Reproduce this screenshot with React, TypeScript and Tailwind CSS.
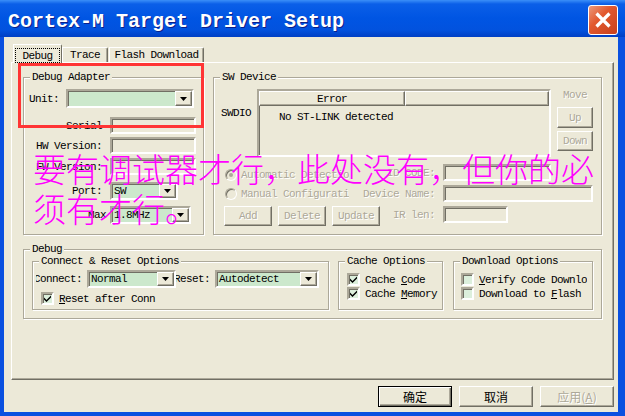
import type { ReactNode } from "react";

// classic 3D edges
const sunken =
  "border-2 border-t-[#aca899] border-l-[#aca899] border-r-white border-b-white shadow-[inset_1px_1px_0_#716f64]";
const raised =
  "border border-t-white border-l-white border-r-[#716f64] border-b-[#716f64] shadow-[inset_-1px_-1px_0_#aca899]";
const dim = "text-[#aca899] [text-shadow:1px_1px_0_#ffffff]";

function DownArrow() {
  return (
    <svg width="7" height="4" viewBox="0 0 7 4">
      <path d="M0 0h7L3.5 4z" fill="#000" />
    </svg>
  );
}

function Combo({ text, className }: { text: string; className: string }) {
  return (
    <div className={`flex shrink-0 bg-[#cce8cc] ${sunken} ${className}`}>
      <span className="flex-1 self-center pl-[2px] overflow-hidden whitespace-nowrap">{text}</span>
      <span className={`w-[17px] shrink-0 flex items-center justify-center bg-[#ece9d8] ${raised}`}>
        <DownArrow />
      </span>
    </div>
  );
}

function Field({ className }: { className: string }) {
  return <div className={`shrink-0 ${sunken} ${className}`} />;
}

function Check({ on }: { on?: boolean }) {
  return (
    <span className={`w-[13px] h-[13px] shrink-0 flex items-center justify-center bg-[#dcefdc] ${sunken}`}>
      {on && (
        <svg width="7" height="7" viewBox="0 0 7 7">
          <polygon points="0,2.5 2.5,5 7,0.5 7,2.5 2.5,7 0,4.5" fill="#000" />
        </svg>
      )}
    </span>
  );
}

function Radio({ on }: { on?: boolean }) {
  return (
    <span className="w-[12px] h-[12px] shrink-0 rounded-full flex items-center justify-center bg-[#ece9d8] border border-t-[#aca899] border-l-[#aca899] border-r-white border-b-white shadow-[inset_1px_1px_0_#716f64]">
      {on && <span className="w-[4px] h-[4px] rounded-full bg-[#aca899]" />}
    </span>
  );
}

function Btn({ children, className }: { children: ReactNode; className: string }) {
  return (
    <div className={`shrink-0 flex items-center justify-center bg-[#ece9d8] ${raised} ${dim} ${className}`}>
      {children}
    </div>
  );
}

function Group({ title, className, children }: { title: string; className: string; children?: ReactNode }) {
  return (
    <fieldset
      className={`min-w-0 shrink-0 border border-[#aca899] shadow-[inset_1px_1px_0_#fff,1px_1px_0_#fff] ${className}`}
    >
      <legend className="ml-[6px] px-[2px] leading-[12px] bg-[#ece9d8] whitespace-nowrap">{title}</legend>
      {children}
    </fieldset>
  );
}

function Row({ label, className, children }: { label: string; className: string; children: ReactNode }) {
  return (
    <div className={`flex items-center ${className}`}>
      <span className="w-[78px] shrink-0 text-right whitespace-nowrap">{label}</span>
      <span className="ml-[8px] flex">{children}</span>
    </div>
  );
}

function Tab({ children, className }: { children: ReactNode; className: string }) {
  return (
    <div
      className={`h-[15px] flex items-center justify-center bg-[#ece9d8] border-t border-l border-r border-t-white border-l-white border-r-[#716f64] rounded-tr-[2px] shadow-[inset_-1px_0_0_#aca899] ${className}`}
    >
      {children}
    </div>
  );
}

const cjk = "font-['Noto_Sans_CJK_SC',sans-serif] tracking-normal";

export default function App() {
  return (
    <div className="relative w-[625px] h-[416px] overflow-hidden flex flex-col bg-[#0a50e0] font-['Liberation_Mono','DejaVu_Sans_Mono',monospace] text-[11px] leading-[12px] tracking-[-0.6px] text-black">
      {/* title bar */}
      <div className="h-[37px] shrink-0 flex justify-between bg-[linear-gradient(180deg,#3b8ff8_0px,#0b5fe8_4px,#0055e3_18px,#0252de_30px,#003fc4_37px)]">
        <div className="pl-[8px] pt-[10px] text-[20px] leading-[24px] font-bold tracking-normal text-white whitespace-nowrap [text-shadow:1px_1px_0_#0b1f8a]">
          Cortex-M Target Driver Setup
        </div>
        <div className="mt-[5px] mr-[7px] w-[30px] h-[30px] rounded-[3px] border border-white bg-[linear-gradient(135deg,#ec9a7c,#e2592f_40%,#c8401d)] flex items-center justify-center">
          <svg width="18" height="18" viewBox="0 0 18 18">
            <path d="M2.5 2.5L15.5 15.5M15.5 2.5L2.5 15.5" stroke="#fff" strokeWidth="3.2" />
          </svg>
        </div>
      </div>

      <div className="flex-1 ml-[4px] mr-[7px] mb-[4px] bg-[#ece9d8] flex flex-col">
        {/* tabs */}
        <div className="relative z-10 flex items-end h-[18px] mt-[7px] ml-[9px]">
          <div className="w-[49px] h-[19px] -mb-[1px] flex bg-[#ece9d8] border-t border-l border-r border-t-white border-l-white border-r-[#716f64] rounded-tr-[2px]">
            <div className="flex-1 mt-[3px] mx-[1px] border border-dotted border-black flex items-center justify-center">
              Debug
            </div>
          </div>
          <Tab className="w-[46px]">Trace</Tab>
          <Tab className="w-[95px] ml-[1px]">Flash Download</Tab>
        </div>

        {/* tab page */}
        <div className="ml-[7px] w-[603px] h-[318px] shrink-0 pt-[8px] border border-t-white border-l-white border-r-[#716f64] border-b-[#716f64] shadow-[inset_-1px_-1px_0_#aca899]">
          <div className="flex ml-[11px]">
            <Group title="Debug Adapter" className="w-[181px] h-[164px]">
              <div className="flex items-center mt-[6px] pl-[5px]">
                <span className="w-[37px] shrink-0">Unit:</span>
                <Combo text="" className="w-[128px] h-[19px]" />
              </div>
              <Row label="Serial" className="mt-[9px]">
                <Field className="w-[86px] h-[17px]" />
              </Row>
              <Row label="HW Version:" className="mt-[3px]">
                <Field className="w-[86px] h-[17px]" />
              </Row>
              <Row label="FW Version:" className="mt-[4px]">
                <Field className="w-[86px] h-[17px]" />
              </Row>
              <Row label="Port:" className="mt-[7px]">
                <Combo text="SW" className="w-[68px] h-[18px]" />
              </Row>
              <div className="flex items-center mt-[6px]">
                <span className="w-[82px] shrink-0 text-right">Max</span>
                <span className="ml-[4px] flex">
                  <Combo text="1.8MHz" className="w-[81px] h-[18px]" />
                </span>
              </div>
            </Group>

            <Group title="SW Device" className="ml-[9px] w-[389px] h-[164px]">
              <div className="flex mt-[6px] pl-[7px]">
                <span className="w-[36px] shrink-0 pt-[18px]">SWDIO</span>
                <div className={`w-[294px] h-[68px] shrink-0 flex flex-col ${sunken}`}>
                  <div className="h-[15px] flex shrink-0">
                    <span className={`w-[146px] flex items-center justify-center ${raised}`}>Error</span>
                    <span className={`flex-1 ${raised}`} />
                  </div>
                  <span className="mt-[5px] pl-[20px] whitespace-nowrap">No ST-LINK detected</span>
                </div>
                <div className="ml-[6px] w-[36px] flex flex-col">
                  <span className={`text-center ${dim}`}>Move</span>
                  <Btn className="mt-[6px] h-[21px]">Up</Btn>
                  <Btn className="mt-[3px] h-[20px]">Down</Btn>
                </div>
              </div>

              <div className="flex mt-[7px] h-[17px]">
                <div className="w-[149px] shrink-0 pl-[11px] pt-[5px] flex items-start">
                  <Radio on />
                  <span className={`ml-[4px] w-[108px] overflow-hidden whitespace-nowrap ${dim}`}>
                    Automatic Detection
                  </span>
                </div>
                <span className={`w-[72px] shrink-0 self-center text-right whitespace-nowrap ${dim}`}>ID CODE:</span>
                <Field className="ml-[8px] w-[108px] h-[17px]" />
              </div>

              <div className="flex mt-[4px] h-[17px]">
                <div className="w-[149px] shrink-0 pl-[11px] flex items-center">
                  <Radio />
                  <span className={`ml-[4px] w-[108px] overflow-hidden whitespace-nowrap ${dim}`}>
                    Manual Configuration
                  </span>
                </div>
                <span className={`w-[72px] shrink-0 self-center text-right whitespace-nowrap ${dim}`}>
                  Device Name:
                </span>
                <Field className="ml-[8px] w-[150px] h-[17px]" />
              </div>

              <div className="flex mt-[4px]">
                <div className="w-[149px] shrink-0 pl-[10px] flex gap-[6px]">
                  <Btn className="w-[48px] h-[20px]">Add</Btn>
                  <Btn className="w-[48px] h-[20px]">Delete</Btn>
                  <Btn className="w-[48px] h-[20px]">Update</Btn>
                </div>
                <span className={`w-[72px] h-[17px] shrink-0 flex items-center justify-end whitespace-nowrap ${dim}`}>
                  IR len:
                </span>
                <Field className="ml-[8px] w-[65px] h-[17px]" />
              </div>
            </Group>
          </div>

          <Group title="Debug" className="mt-[8px] ml-[11px] w-[579px] h-[76px]">
            <div className="flex ml-[8px]">
              <Group title="Connect & Reset Options" className="w-[297px] h-[55px]">
                <div className="flex items-center mt-[3px] h-[18px]">
                  <span className="ml-[3px] w-[46px] shrink-0 overflow-hidden flex justify-end whitespace-nowrap">
                    Connect:
                  </span>
                  <Combo text="Normal" className="ml-[5px] w-[89px] h-[18px]" />
                  <span className="w-[34px] shrink-0 overflow-hidden flex justify-end whitespace-nowrap">
                    Reset:
                  </span>
                  <Combo text="Autodetect" className="ml-[5px] w-[104px] h-[18px]" />
                </div>
                <div className="flex items-center mt-[4px] pl-[8px] gap-[5px]">
                  <Check on />
                  <span className="whitespace-nowrap">
                    <span className="underline">R</span>eset after Conn
                  </span>
                </div>
              </Group>

              <Group title="Cache Options" className="ml-[9px] w-[105px] h-[55px]">
                <div className="flex items-center mt-[6px] pl-[8px] gap-[5px]">
                  <Check on />
                  <span className="whitespace-nowrap">
                    Cache <span className="underline">C</span>ode
                  </span>
                </div>
                <div className="flex items-center mt-[1px] pl-[8px] gap-[5px]">
                  <Check on />
                  <span className="whitespace-nowrap">
                    Cache <span className="underline">M</span>emory
                  </span>
                </div>
              </Group>

              <Group title="Download Options" className="ml-[10px] w-[140px] h-[55px]">
                <div className="flex items-center mt-[6px] pl-[7px] gap-[5px]">
                  <Check />
                  <span className="w-[108px] overflow-hidden whitespace-nowrap">
                    <span className="underline">V</span>erify Code Download
                  </span>
                </div>
                <div className="flex items-center mt-[1px] pl-[7px] gap-[5px]">
                  <Check />
                  <span className="whitespace-nowrap">
                    Download to <span className="underline">F</span>lash
                  </span>
                </div>
              </Group>
            </div>
          </Group>
        </div>

        {/* dialog buttons */}
        <div className={`flex justify-end gap-[7px] pr-[4px] mt-[6px] text-[12px] ${cjk}`}>
          <div className="w-[74px] h-[21px] flex items-center justify-center border border-black shadow-[inset_1px_1px_0_#fff,inset_-1px_-1px_0_#716f64,inset_-2px_-2px_0_#aca899]">
            确定
          </div>
          <div className={`w-[74px] h-[21px] flex items-center justify-center ${raised}`}>取消</div>
          <div className={`w-[74px] h-[21px] flex items-center justify-center ${raised} ${dim}`}>
            应用(<span className="underline">A</span>)
          </div>
        </div>
      </div>

      {/* red marker box */}
      <div className="absolute left-[18px] top-[63px] w-[186px] h-[65px] border-[3px] border-[#ff3535]" />

      {/* magenta note */}
      <div className="absolute left-[33px] top-[148px] text-[33px] leading-[40px] text-[#ff00ff] font-light whitespace-nowrap font-['Noto_Sans_CJK_SC',sans-serif] tracking-normal">
        要有调试器才行，此处没有，但你的必
        <br />
        须有才行。
      </div>
    </div>
  );
}
